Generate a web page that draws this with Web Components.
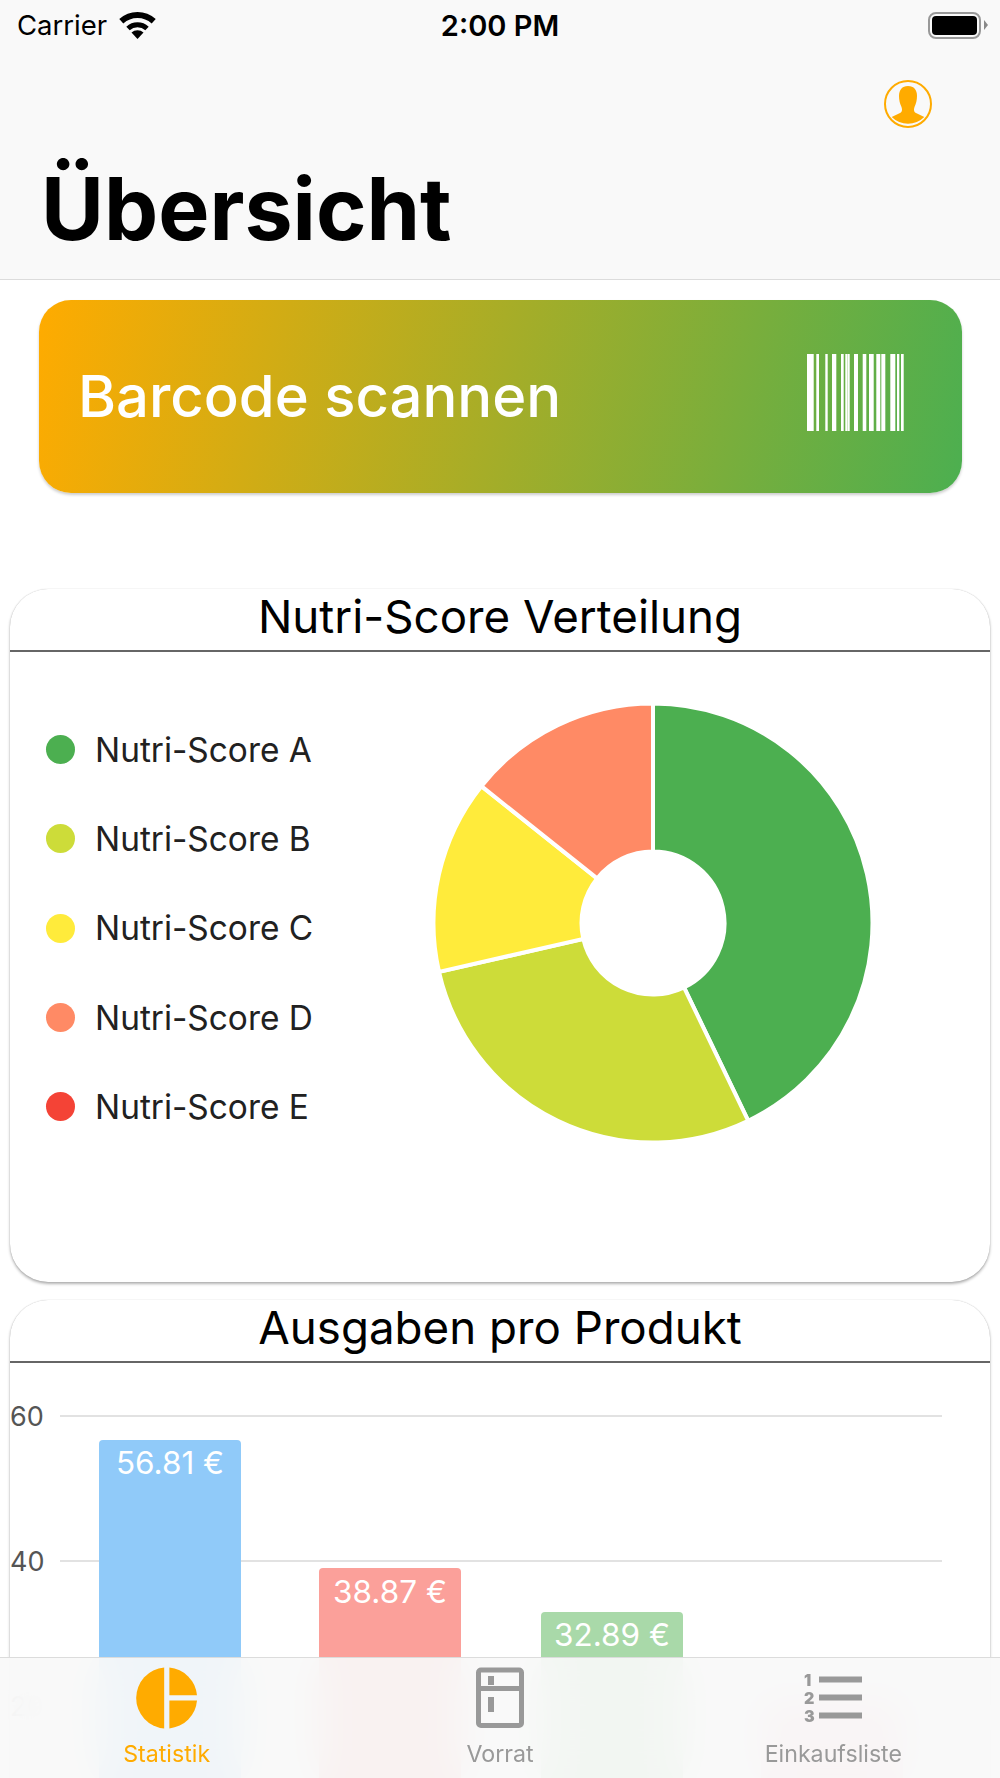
<!DOCTYPE html>
<html lang="de">
<head>
<meta charset="utf-8">
<title>Übersicht</title>
<style>
    html, body { margin: 0; padding: 0; background: #fff; }
    body {
        position: relative;
        width: 1000px;
        height: 1778px;
        overflow: hidden;
        font-family: Inter, "Liberation Sans", sans-serif;
    }
    main { display: block; }
</style>
</head>
<body>
<app-header heading="Übersicht"></app-header>
<main>
    <scan-button label="Barcode scannen"></scan-button>
    <stat-card heading="Nutri-Score Verteilung" style="height: 693px; margin-top: 96px;">
        <score-legend>
            <legend-item color="#4caf50">Nutri-Score A</legend-item>
            <legend-item color="#cddc39">Nutri-Score B</legend-item>
            <legend-item color="#ffeb3b">Nutri-Score C</legend-item>
            <legend-item color="#ff8a65">Nutri-Score D</legend-item>
            <legend-item color="#f44336">Nutri-Score E</legend-item>
        </score-legend>
        <score-donut values="3,2,1,1" colors="#4caf50,#cddc39,#ffeb3b,#ff8a65"></score-donut>
    </stat-card>
    <stat-card heading="Ausgaben pro Produkt" style="height: 560px; margin-top: 18px;">
        <spend-chart></spend-chart>
    </stat-card>
</main>
<tab-bar>
    <tab-item label="Statistik" active>
        <svg slot="icon" width="62" height="62" viewBox="0 0 62 62" fill="#ffab00">
            <path d="M28.2 .6V61.4A30.5 30.5 0 0 1 28.2 .6Z"/>
            <path d="M33.4 .6A30.5 30.5 0 0 1 61 28.2H33.4Z"/>
            <path d="M33.4 33.4H61A30.5 30.5 0 0 1 33.4 61.4Z"/>
        </svg>
    </tab-item>
    <tab-item label="Vorrat">
        <svg slot="icon" width="62" height="62" viewBox="0 0 62 62" fill="#999">
            <path fill-rule="evenodd" d="M12 .5H50a5 5 0 0 1 5 5V56a5 5 0 0 1-5 5H12a5 5 0 0 1-5-5V5.500a5 5 0 0 1 5-5ZM12 5.500V19H50V5.500ZM12 24V56H50V24Z"/>
            <rect x="19" y="9" width="6" height="9"/>
            <rect x="19" y="30" width="6" height="15"/>
        </svg>
    </tab-item>
    <tab-item label="Einkaufsliste">
        <svg slot="icon" width="62" height="62" viewBox="0 0 62 62" fill="#999">
            <text x="2" y="19" font-family="Inter, sans-serif" font-size="16" font-weight="900">1</text>
            <text x="2" y="37" font-family="Inter, sans-serif" font-size="16" font-weight="900">2</text>
            <text x="2" y="55" font-family="Inter, sans-serif" font-size="16" font-weight="900">3</text>
            <rect x="17" y="9.500" width="43" height="6"/>
            <rect x="17" y="27.500" width="43" height="6"/>
            <rect x="17" y="45.500" width="43" height="6"/>
        </svg>
    </tab-item>
</tab-bar>

<script>
class AppHeader extends HTMLElement {
    connectedCallback() {
        this.attachShadow({ mode: 'open' });
        this.shadowRoot.innerHTML = `
            <style>
                :host {
                    display: block;
                    height: 280px;
                    box-sizing: border-box;
                    background: #f9f9f9;
                    border-bottom: 1.5px solid #dcdcdc;
                    color: #000;
                }
                .status {
                    display: grid;
                    grid-template-columns: 1fr auto 1fr;
                    align-items: center;
                    height: 50px;
                    padding: 0 12px 0 17px;
                }
                .left { display: flex; align-items: center; gap: 12px; font-size: 27.5px; }
                .time { font-size: 29px; font-weight: 600; margin-right: 5px; }
                .right { justify-self: end; display: flex; align-items: center; gap: 3px; }
                .battery {
                    box-sizing: border-box;
                    width: 53px;
                    height: 27px;
                    padding: 2px;
                    border: 2.5px solid #999;
                    border-radius: 8px;
                }
                .battery div { height: 100%; background: #000; border-radius: 4px; }
                .tip { width: 0; height: 0; border-left: 4px solid #888; border-top: 5px solid transparent; border-bottom: 5px solid transparent; }
                .actions { display: flex; justify-content: flex-end; padding: 30px 68px 0 0; }
                h1 { margin: 31px 0 0 41px; font-size: 86px; line-height: 100px; font-weight: 700; }
            </style>
            <div class="status">
                <div class="left">
                    <span>Carrier</span>
                    <svg width="37" height="27" viewBox="0 0 37 27">
                        <path d="M2.300 9.300A24 24 0 0 1 34.700 9.300" fill="none" stroke="#000" stroke-width="6"/>
                        <path d="M9 16.500A14 14 0 0 1 28 16.500" fill="none" stroke="#000" stroke-width="5"/>
                        <path d="M18.500 27L12.500 20.500A8.800 8.800 0 0 1 24.500 20.500Z"/>
                    </svg>
                </div>
                <div class="time">2:00 PM</div>
                <div class="right">
                    <div class="battery"><div></div></div>
                    <div class="tip"></div>
                </div>
            </div>
            <div class="actions">
                <svg width="48" height="48" viewBox="0 0 48 48">
                    <circle cx="24" cy="24" r="23" fill="none" stroke="#ffab00" stroke-width="2"/>
                    <path fill="#ffab00" d="M24 6C30 6 33 10 33 16C33 20 32 24 30.500 27C29.500 30 30 32 32 33L40.300 37A23 23 0 0 1 7.700 37L16 33C18 32 18.500 30 17.500 27C16 24 15 20 15 16C15 10 18 6 24 6Z"/>
                </svg>
            </div>
            <h1>${this.getAttribute('heading')}</h1>
        `;
    }
}

class ScanButton extends HTMLElement {
    connectedCallback() {
        const bars = [[0, 6.7], [9.3, 2.7], [18.3, 2.4], [25, 4.3], [34, 2.7], [38.3, 1.7], [40.3, 2.4], [47, 4],
            [55.7, 3.6], [62, 4.7], [69.3, 4], [74.3, 4], [83.3, 5], [90, 2.3], [94, 2.7]];
        this.attachShadow({ mode: 'open' });
        this.shadowRoot.innerHTML = `
            <style>
                :host {
                    display: flex;
                    align-items: center;
                    justify-content: space-between;
                    box-sizing: border-box;
                    height: 193px;
                    margin: 20px 38px 0 39px;
                    padding: 0 58px 0 39px;
                    border-radius: 32px;
                    background: linear-gradient(102deg, #ffab00, #4caf50);
                    box-shadow: 0 2px 3px rgba(0, 0, 0, 0.2);
                    color: #fff;
                    font-size: 58px;
                    font-weight: 500;
                }
                span { margin-bottom: 2px; }
                svg { margin-bottom: 8px; }
            </style>
            <span>${this.getAttribute('label')}</span>
            <svg width="97" height="77" viewBox="0 0 97 77" fill="#fff">
                ${bars.map(b => `<rect x="${b[0]}" width="${b[1]}" height="77"/>`).join('')}
            </svg>
        `;
    }
}

class StatCard extends HTMLElement {
    connectedCallback() {
        this.attachShadow({ mode: 'open' });
        this.shadowRoot.innerHTML = `
            <style>
                :host {
                    display: block;
                    box-sizing: border-box;
                    margin: 0 10px;
                    border-radius: 38px;
                    background: #fff;
                    box-shadow: 0 2px 3px rgba(0, 0, 0, 0.3), 0 0 1px rgba(0, 0, 0, 0.25);
                    overflow: hidden;
                }
                h2 {
                    margin: 0;
                    height: 61px;
                    box-sizing: content-box;
                    border-bottom: 2px solid #666;
                    font-size: 45.7px;
                    line-height: 56px;
                    font-weight: 400;
                    text-align: center;
                    color: #000;
                }
                .body { display: flex; align-items: flex-start; }
            </style>
            <h2>${this.getAttribute('heading')}</h2>
            <div class="body"><slot></slot></div>
        `;
    }
}

class ScoreLegend extends HTMLElement {
    connectedCallback() {
        this.attachShadow({ mode: 'open' });
        this.shadowRoot.innerHTML = `
            <style>
                :host { display: block; flex: none; width: 423px; box-sizing: border-box; padding: 53px 0 0 36px; }
            </style>
            <slot></slot>
        `;
    }
}

class LegendItem extends HTMLElement {
    connectedCallback() {
        this.attachShadow({ mode: 'open' });
        this.shadowRoot.innerHTML = `
            <style>
                :host {
                    display: flex;
                    align-items: center;
                    gap: 20px;
                    height: 89.300px;
                    font-size: 33.4px;
                    color: #212121;
                }
                i { width: 29px; height: 29px; border-radius: 50%; background: ${this.getAttribute('color')}; }
            </style>
            <i></i><span><slot></slot></span>
        `;
    }
}

class ScoreDonut extends HTMLElement {
    connectedCallback() {
        const values = this.getAttribute('values').split(',').map(Number);
        const colors = this.getAttribute('colors').split(',');
        const total = values.reduce((a, b) => a + b, 0);
        const R = 219.5, r = 71.5;
        const pt = (rad, a) => `${(rad * Math.sin(a)).toFixed(2)} ${(-rad * Math.cos(a)).toFixed(2)}`;
        let start = 0;
        const slices = values.map((v, i) => {
            const end = start + v / total * Math.PI * 2;
            const large = end - start > Math.PI ? 1 : 0;
            const d = `M${pt(R, start)}A${R} ${R} 0 ${large} 1 ${pt(R, end)}L${pt(r, end)}A${r} ${r} 0 ${large} 0 ${pt(r, start)}Z`;
            start = end;
            return `<path d="${d}" fill="${colors[i]}" stroke="#fff" stroke-width="4"/>`;
        });
        this.attachShadow({ mode: 'open' });
        this.shadowRoot.innerHTML = `
            <style>
                :host { display: block; flex: none; padding-top: 49px; }
                svg { display: block; }
            </style>
            <svg width="440" height="444" viewBox="-220 -222 440 444">${slices.join('')}</svg>
        `;
    }
}

class SpendChart extends HTMLElement {
    connectedCallback() {
        const grid = [[60, 53], [40, 198], [20, 343]];
        const bars = [
            { x: 89, top: 77, color: '#90caf9', label: '56.81 €', base: 111 },
            { x: 309, top: 205, color: '#fba09a', label: '38.87 €', base: 240 },
            { x: 531, top: 249, color: '#a9d9a9', label: '32.89 €', base: 283 },
            { x: 751, top: 336, color: '#f8c4cf', label: '', base: 0 }
        ];
        this.attachShadow({ mode: 'open' });
        this.shadowRoot.innerHTML = `
            <style>
                :host { display: block; flex: 1; }
                svg { display: block; font-family: Inter, "Liberation Sans", sans-serif; }
            </style>
            <svg width="980" height="500" viewBox="0 0 980 500">
                ${grid.map(g => `
                    <rect x="50" y="${g[1] - 1}" width="882" height="2" fill="#e2e2e2"/>
                    <text x="0" y="${g[1] + 10}" font-size="27" fill="#555">${g[0]}</text>`).join('')}
                ${bars.map(b => `
                    <rect x="${b.x}" y="${b.top}" width="142" height="${500 - b.top}" rx="4" fill="${b.color}"/>
                    <text x="${b.x + 71}" y="${b.base}" font-size="31.500" fill="#fff" text-anchor="middle">${b.label}</text>`).join('')}
            </svg>
        `;
    }
}

class TabBar extends HTMLElement {
    connectedCallback() {
        this.attachShadow({ mode: 'open' });
        this.shadowRoot.innerHTML = `
            <style>
                :host {
                    position: absolute;
                    left: 0;
                    right: 0;
                    bottom: 0;
                    height: 121px;
                    box-sizing: border-box;
                    display: flex;
                    border-top: 1.500px solid #dcdcdc;
                    background: rgba(248, 248, 248, 0.92);
                    backdrop-filter: blur(20px);
                }
            </style>
            <slot></slot>
        `;
    }
}

class TabItem extends HTMLElement {
    connectedCallback() {
        this.attachShadow({ mode: 'open' });
        this.shadowRoot.innerHTML = `
            <style>
                :host {
                    flex: 1;
                    display: flex;
                    flex-direction: column;
                    align-items: center;
                    padding-top: 9px;
                    color: ${this.hasAttribute('active') ? '#ffab00' : '#999'};
                    font-size: 23.2px;
                }
                ::slotted(svg) { display: block; }
                span { margin-top: 10px; line-height: 30px; }
            </style>
            <slot name="icon"></slot>
            <span>${this.getAttribute('label')}</span>
        `;
    }
}

customElements.define('app-header', AppHeader);
customElements.define('scan-button', ScanButton);
customElements.define('stat-card', StatCard);
customElements.define('score-legend', ScoreLegend);
customElements.define('legend-item', LegendItem);
customElements.define('score-donut', ScoreDonut);
customElements.define('spend-chart', SpendChart);
customElements.define('tab-bar', TabBar);
customElements.define('tab-item', TabItem);
</script>
</body>
</html>
